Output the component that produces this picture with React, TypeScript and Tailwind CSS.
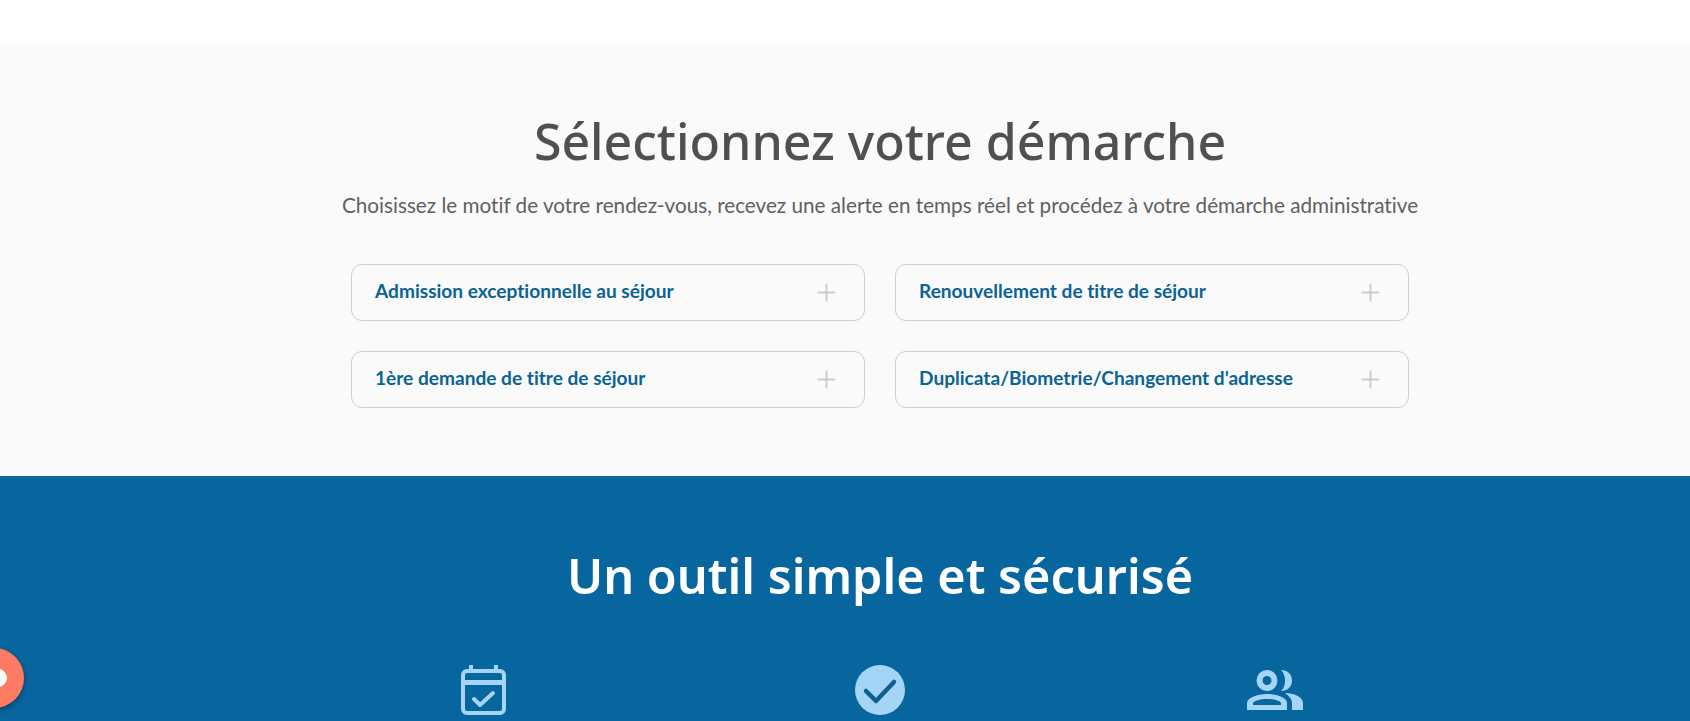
import { Plus } from "lucide-react";

const demarches = [
  "Admission exceptionnelle au séjour",
  "Renouvellement de titre de séjour",
  "1ère demande de titre de séjour",
  "Duplicata/Biometrie/Changement d'adresse",
];

function CalendarCheck() {
  return (
    <svg className="mr-[4px]" width="45" height="50" viewBox="0 0 45 50" fill="none" stroke="#a5d5f6" strokeWidth="4">
      <path d="M10 0v7M35 0v7" />
      <rect x="2" y="6" width="41" height="42" rx="4" />
      <path d="M2 17.5h41" strokeWidth="5" />
      <path d="M13 34l6 6 13-12" strokeLinecap="round" strokeLinejoin="round" />
    </svg>
  );
}

function CircleCheck() {
  return (
    <svg width="50" height="50" viewBox="0 0 50 50" fill="none">
      <circle cx="25" cy="25" r="25" fill="#a5d5f6" />
      <path d="M11 26l10 10 18-19" stroke="#0f5f8f" strokeWidth="4.5" strokeLinecap="round" strokeLinejoin="round" />
    </svg>
  );
}

function People() {
  return (
    <svg width="56" height="40" viewBox="0 0 56 40" fill="#a5d5f6">
      <path fillRule="evenodd" d="M20 0a10.5 10.5 0 1 1 0 21a10.5 10.5 0 0 1 0-21zm0 6a4.5 4.5 0 1 0 0 9a4.5 4.5 0 0 0 0-9z" />
      <path d="M34 0c6 0 11 4 11 10.500s-5 10.500-11 10.500c3-3 4-6.500 4-10.500s-1-7.500-4-10.500z" />
      <path fillRule="evenodd" d="M0 40v-7c0-5 10-9 20-9s20 4 20 9v7zm6-5h28v-2c-1-2-7-4-14-4s-13 2-14 4z" />
      <path d="M38 23c9 0 18 4 18 10v7h-11v-7c0-4-3-7-7-10z" />
    </svg>
  );
}

export default function App() {
  return (
    <div className="h-[721px] overflow-hidden bg-white font-['Lato',sans-serif] [font-variant-ligatures:none]">
      <div className="h-[43px]" />
      <section className="flex h-[433px] flex-col items-center bg-[#fafafa] pl-[70px]">
        <h2 className="mt-[58px] font-['Noto_Sans',sans-serif] text-[50px] leading-[80px] font-medium text-[#505050]">
          Sélectionnez votre démarche
        </h2>
        <p className="mt-[10px] text-[20.7px] leading-[28px] text-[#606060]">
          Choisissez le motif de votre rendez-vous, recevez une alerte en temps réel et procédez à votre démarche administrative
        </p>
        <div className="mt-[45px] grid grid-cols-[514px_514px] gap-[30px]">
          {demarches.map((label) => (
            <div
              className="flex h-[57px] items-center justify-between rounded-[11px] border border-[#cfcfcf] pr-[24px] pl-[23px]"
              key={label}
            >
              <span className="pb-[2px] text-[19.1px] font-bold text-[#0a6394]">{label}</span>
              <Plus className="h-[27px] w-[27px] text-[#cccccc]" strokeWidth={1.8} />
            </div>
          ))}
        </div>
      </section>
      <section className="relative flex h-[245px] flex-col items-center bg-[#08669f] pl-[70px]">
        <h2 className="mt-[59px] font-['Noto_Sans',sans-serif] text-[48.6px] leading-[80px] font-semibold text-white">
          Un outil simple et sécurisé
        </h2>
        <div className="mt-[50px] grid w-[1185px] grid-cols-3 items-center justify-items-center">
          <CalendarCheck />
          <CircleCheck />
          <People />
        </div>
        <div className="absolute top-[172px] -left-[36px] flex h-[60px] w-[60px] items-center justify-end rounded-full bg-[#ff7a63] pr-[17px] shadow-[0_2px_6px_rgba(0,0,0,0.4)]">
          <div className="h-[18px] w-[18px] rounded-full bg-white" />
        </div>
      </section>
    </div>
  );
}
